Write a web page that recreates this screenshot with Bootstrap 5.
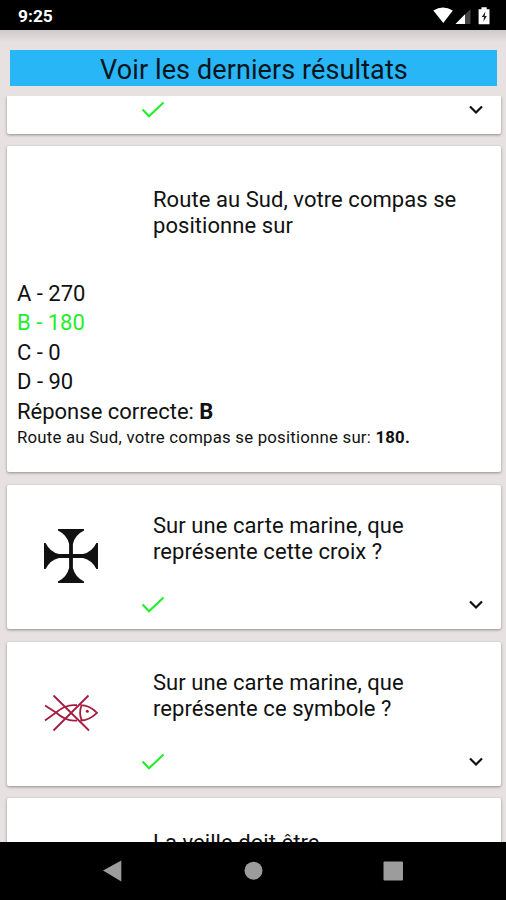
<!DOCTYPE html>
<html lang="fr">
<head>
<meta charset="utf-8">
<meta name="viewport" content="width=device-width, initial-scale=1">
<title>Résultats</title>
<link href="https://cdn.jsdelivr.net/npm/bootstrap@5.3.0/dist/css/bootstrap.min.css" rel="stylesheet">
<style>
body{font-family:Roboto,sans-serif;color:#111;background:#e7e1e1;height:900px}
svg{display:block}
.status{height:30px;padding:2px 14px 0 18px;font-size:17.4px;font-weight:700}
.head-area{height:66px;padding:20px 9px 10px 10px;background:linear-gradient(#cfcaca 0,#e7e1e1 12px)}
.results-btn{background:#29b6f6;border-radius:0;border:0;padding:4px 0 0 1px;height:36px;line-height:32px;font-size:27px;color:#06141c;letter-spacing:.1px}
.results{height:746px;padding:0 5px 0 7px}
.quiz{border:0;border-radius:2px;box-shadow:0 1px 3px rgba(0,0,0,.38);color:#111;flex-shrink:0}
.q-first{height:38px;border-radius:0 0 2px 2px;margin-bottom:12px}
.q-open{height:326px;margin-bottom:13px;padding:0 10px}
.q-closed{height:144px;margin-bottom:12.5px}
.pic{width:146px;padding-left:36px}
.cross{margin-top:43px}
.fish{margin-top:51px}
.question{font-size:22px;line-height:26px;padding-top:28px;letter-spacing:.06px}
.q-open .question{padding:41px 0 0 136px;height:132.5px}
.q-last .question{padding-top:32px}
.answers{font-size:22px;line-height:29.5px}
.good{color:#22ee2a}
.explain{font-size:16.8px;line-height:23px;letter-spacing:.215px}
.foot{padding:0 17px 0 134px}
.q-closed .foot{padding-bottom:15px}
.q-first .foot{padding-top:5px}
.chev{margin-top:3px}
.navkeys{height:58px}
.navkeys svg{width:506px;height:58px}
</style>
</head>
<body class="d-flex flex-column overflow-hidden">
<svg class="d-none">
  <symbol id="check" viewBox="0 0 24 18"><path d="M1.6 8.5 8 15.3 22.5 1.5" fill="none" stroke="#22ee2a" stroke-width="2.1"/></symbol>
  <symbol id="chev" viewBox="0 0 16 12"><path d="M2 2.5 8 8.5 14 2.5" fill="none" stroke="#111" stroke-width="2.2"/></symbol>
</svg>
<header class="status bg-black text-white d-flex justify-content-between align-items-center flex-shrink-0">
  <span>9:25</span>
  <svg width="60" height="20" viewBox="432 5 60 20">
    <path d="M433.3 9.6Q443 3.3 452.8 9.6L443.3 22Z" fill="#fff"/>
    <path d="M455.5 23 470.5 8V23Z" fill="#444"/><path d="M455.5 23 465 13.3V23Z" fill="#fff"/>
    <path d="M481.5 6.3h5.2v2h2.8V23.3H478.6V8.3h2.9Z" fill="#fff"/><path d="M485.4 10.5 481.8 16h2.2l-.6 4.8 3.4-5.8h-2.1Z" fill="#222"/>
  </svg>
</header>
<div class="head-area flex-shrink-0"><button class="results-btn btn w-100 d-block">Voir les derniers résultats</button></div>
<main class="results d-flex flex-column overflow-hidden flex-shrink-0">
  <div class="quiz card q-first"><div class="foot d-flex justify-content-between"><svg width="24" height="18"><use href="#check"/></svg><svg class="chev" width="16" height="12"><use href="#chev"/></svg></div></div>

  <div class="quiz card q-open">
    <div class="question">Route au Sud, votre compas se<br>positionne sur</div>
    <div class="answers">
      <div>A - 270</div><div class="good">B - 180</div><div>C - 0</div><div>D - 90</div>
      <div>Réponse correcte: <b>B</b></div>
    </div>
    <div class="explain">Route au Sud, votre compas se positionne sur: <b>180.</b></div>
  </div>

  <div class="quiz card q-closed">
    <div class="d-flex flex-grow-1">
      <div class="pic"><svg class="cross" width="56" height="56" viewBox="0 0 56 56">
        <path d="M15 1H41V2.6Q32 7 29.9 16V26.1H40Q49 24 53.4 15H55V41H53.4Q49 32 40 29.9H29.9V40Q32 49 41 53.4V55H15V53.4Q24 49 26.1 40V29.9H16Q7 32 2.6 41H1V15H2.6Q7 24 16 26.1H26.1V16Q24 7 15 2.6Z" fill="#111"/></svg></div>
      <div class="question">Sur une carte marine, que<br>représente cette croix ?</div>
    </div>
    <div class="foot d-flex justify-content-between"><svg width="24" height="18"><use href="#check"/></svg><svg class="chev" width="16" height="12"><use href="#chev"/></svg></div>
  </div>

  <div class="quiz card q-closed">
    <div class="d-flex flex-grow-1">
      <div class="pic"><svg class="fish" width="56" height="40" viewBox="0 0 56 40">
        <g fill="none" stroke="#a51c40" stroke-width="1.8"><path d="M10.5 2.5 46 37.5M45.5 2.5 10.5 37.5M2 12.5 13 19.5Q22 27.5 31 27.7M2 27.5 13 19.5Q22 12 31 12.2M37.5 12.2Q46 12 54 19.8 46 27.5 37.5 27.5M31 12.2H34M31 27.7H34"/><path d="M38.5 12.5Q35.5 20 38.8 27.5"/></g><circle cx="44.3" cy="18.3" r="1.5" fill="#b3152e"/></svg></div>
      <div class="question">Sur une carte marine, que<br>représente ce symbole ?</div>
    </div>
    <div class="foot d-flex justify-content-between"><svg width="24" height="18"><use href="#check"/></svg><svg class="chev" width="16" height="12"><use href="#chev"/></svg></div>
  </div>

  <div class="quiz card q-closed q-last"><div class="d-flex"><div class="pic"></div><div class="question">La veille doit être</div></div></div>
</main>
<nav class="navkeys bg-black flex-shrink-0">
  <svg viewBox="0 842 506 58" fill="#9c9c9c"><path d="M103 870.5 121.3 860.5V881.5Z"/><circle cx="253.5" cy="870.7" r="9"/><rect x="383.5" y="861.5" width="19.5" height="19" rx="1"/></svg>
</nav>
<script src="https://cdn.jsdelivr.net/npm/bootstrap@5.3.0/dist/js/bootstrap.bundle.min.js"></script>
</body>
</html>
